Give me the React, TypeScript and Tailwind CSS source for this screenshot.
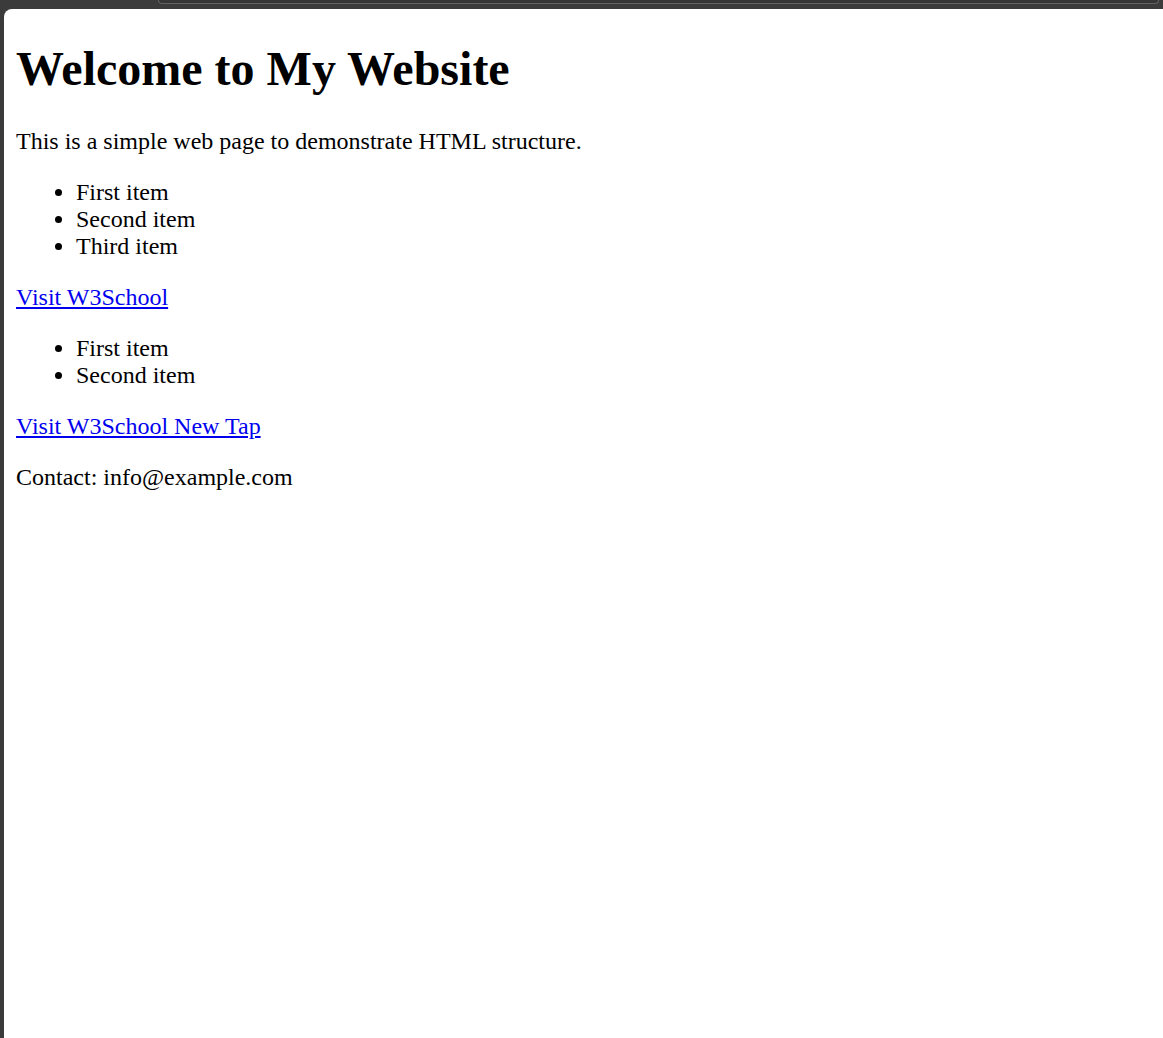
export default function App() {
  return (
    <div className="flex h-screen w-full flex-col bg-[#3b3b3b]">
      {/* browser chrome strip */}
      <div className="flex h-[9px] shrink-0 pl-[158px] pr-[4px]">
        <div className="h-[4px] flex-1 rounded-b-[6px] border-x border-b border-[#626262] bg-[#353535]" />
      </div>

      <div className="flex min-h-0 flex-1 pl-[4px]">
        <div className="flow-root flex-1 rounded-tl-[8px] bg-white px-[12px] font-['Liberation_Serif','Times_New_Roman',serif] text-[24px] leading-[normal] text-black">
          <h1 className="my-[32px] text-[48px] font-bold leading-[normal]">Welcome to My Website</h1>

          <p className="my-[24px]">This is a simple web page to demonstrate HTML structure.</p>

          <ul className="my-[24px] list-disc pl-[60px]">
            <li>First item</li>
            <li>Second item</li>
            <li>Third item</li>
          </ul>

          <p className="my-[24px]">
            <a href="#" className="text-[#0000ee] underline">Visit W3School</a>
          </p>

          <ul className="my-[24px] list-disc pl-[60px]">
            <li>First item</li>
            <li>Second item</li>
          </ul>

          <p className="my-[24px]">
            <a href="#" className="text-[#0000ee] underline">Visit W3School New Tap</a>
          </p>

          <p className="my-[24px]">Contact: info@example.com</p>
        </div>
      </div>
    </div>
  );
}
